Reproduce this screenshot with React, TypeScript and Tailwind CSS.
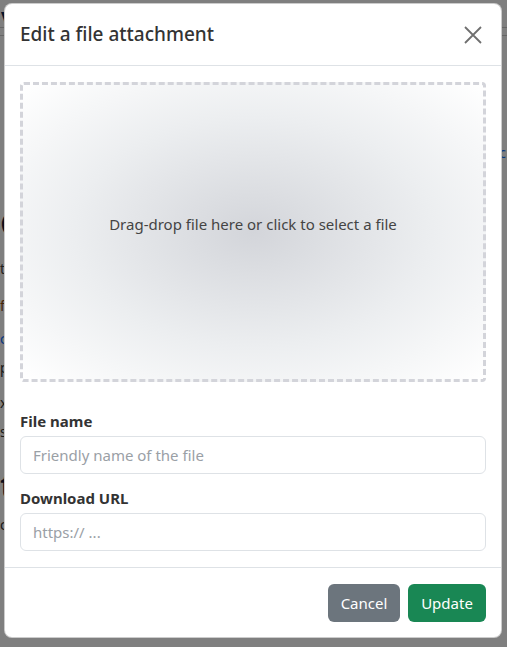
const FONT = "font-['Noto_Sans','Open_Sans',sans-serif]";

function BackgroundPage() {
  // the page behind the dialog, mostly hidden by it
  return (
    <div aria-hidden className="h-[647px] w-full overflow-hidden bg-white text-[#212529]">
      <div className="h-[28px] border-b border-[#ccc] pl-px pt-1 text-[20px] font-bold text-[#0a2a5a]">V</div>
      <div className="h-[8px] border-b border-[#ccc]" />
      <div className="flex h-[170px] items-start justify-end pt-[105px] pr-px text-[15px] text-[#0d6efd]">
        <span>c</span>
      </div>
      <div className="text-[34px] font-bold leading-none text-[#1b1b3a]">C</div>
      <div className="mt-[18px] text-[14px] text-[#444]">t</div>
      <div className="mt-[16px] text-[14px] text-[#8a4a10]">f</div>
      <div className="mt-[12px] text-[14px] text-[#0d6efd]">c</div>
      <div className="mt-[8px] text-[14px] text-[#333]">p</div>
      <div className="mt-[14px] text-[14px] text-[#333]">x</div>
      <div className="mt-[8px] text-[14px] text-[#333]">s</div>
      <div className="mt-[26px] text-[34px] font-bold leading-none text-[#1b1b3a]">t</div>
      <div className="mt-[12px] text-[14px] text-[#333]">c</div>
    </div>
  );
}

export default function App() {
  return (
    <div className={`relative h-[647px] w-[507px] overflow-hidden ${FONT}`}>
      <BackgroundPage />

      {/* backdrop */}
      <div className="absolute inset-0 bg-black/50" />

      {/* dialog */}
      <div className="absolute left-[4px] top-[3px] flex w-[498px] flex-col rounded-[8px] border border-black/20 bg-white">
        <div className="flex h-[62px] items-center justify-between border-b border-[#dee2e6] px-[15px]">
          <h5 className="text-[19px] font-medium text-[#333]">Edit a file attachment</h5>
          <button className="mr-[1px] flex h-[24px] w-[24px] items-center justify-center text-[#6f6f6f]">
            <svg width="18" height="18" viewBox="0 0 18 18" fill="none" stroke="currentColor" strokeWidth="1.8">
              <path d="M1 1L17 17M17 1L1 17" />
            </svg>
          </button>
        </div>

        <div className="px-[15px] pt-[16px]">
          <div className="flex h-[300px] items-center justify-center rounded-[4px] border-[3px] border-dashed border-[#d3d4da] bg-[radial-gradient(ellipse_at_center,#d3d5da_0%,#eceef0_55%,#ffffff_100%)] pb-[16px]">
            <span className="text-[15px] text-[#444]">Drag-drop file here or click to select a file</span>
          </div>

          <label className="mt-[27px] mb-[3px] block text-[15px] font-bold leading-[24px] text-[#333]">File name</label>
          <input
            className="h-[38px] w-full rounded-[6px] border border-[#dee2e6] px-[12px] text-[15px] text-[#212529] outline-none placeholder:text-[#9aa0a6]"
            placeholder="Friendly name of the file"
          />

          <label className="mt-[12px] mb-[3px] block text-[15px] font-bold leading-[24px] text-[#333]">Download URL</label>
          <input
            className="h-[38px] w-full rounded-[6px] border border-[#dee2e6] px-[12px] text-[15px] text-[#212529] outline-none placeholder:text-[#9aa0a6]"
            placeholder="https:// ..."
          />
        </div>

        <div className="mt-[16px] flex justify-end gap-[8px] border-t border-[#dee2e6] px-[15px] pt-[16px] pb-[15px]">
          <button className="h-[38px] w-[72px] rounded-[6px] bg-[#6c757d] text-[15px] text-white">Cancel</button>
          <button className="h-[38px] w-[78px] rounded-[6px] bg-[#198754] text-[15px] text-white">Update</button>
        </div>
      </div>
    </div>
  );
}
